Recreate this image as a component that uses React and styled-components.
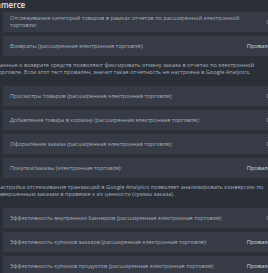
import React from 'react';
import styled, { createGlobalStyle } from 'styled-components';

const GlobalStyle = createGlobalStyle`
  * {
    box-sizing: border-box;
  }

  body {
    margin: 0;
    padding: 0;
    overflow: hidden;
    background-color: #2b2f37;
  }
`;

// Panel is wider than the window, it is cropped on both sides
const Panel = styled.section`
  font-family: 'Open Sans', 'Noto Sans', sans-serif;
  width: 300px;
  margin-left: -20px;
  display: flex;
  flex-direction: column;
  gap: 4px;
`;

const Title = styled.h2`
  margin: 0 0 -2px;
  height: 10px;
  font-size: 8px;
  line-height: 10px;
  font-weight: 600;
  color: #e4e7eb;
`;

const Row = styled.div`
  margin-left: 23px;
  display: flex;
  align-items: center;
  min-height: 20px;
  padding: 3px 0 3px 7px;
  background-color: #363b45;
`;

const Label = styled.div`
  flex: 1;
  font-size: 5.65px;
  line-height: 7px;
  color: #a9b0bc;
`;

const Status = styled.div`
  width: 40px;
  padding-right: 6px;
  text-align: right;
  font-size: 5.65px;
  line-height: 14px;
  color: ${(p) => (p.$failed ? '#d6d9de' : '#a9b0bc')};
`;

const Note = styled.p`
  margin: 0;
  padding: 2px 0 6px 16px;
  width: 296px;
  font-size: 5.65px;
  line-height: 7px;
  color: #a9b0bc;
`;

const items = [
  { type: 'row', label: 'Отслеживание категорий товаров в рамках отчетов по расширенной электронной торговли:', status: 'OK' },
  { type: 'row', label: 'Возвраты (расширенная электронная торговля):', status: 'Провален', failed: true },
  { type: 'note', text: 'Данные о возврате средств позволяют фиксировать отмену заказа в отчетах по электронной торговле. Если этот тест провален, значит такая отчетность не настроена в Google Analytics.' },
  { type: 'row', label: 'Просмотры товаров (расширенная электронная торговля):', status: 'OK' },
  { type: 'row', label: 'Добавление товара в корзину (расширенная электронная торговля):', status: 'OK' },
  { type: 'row', label: 'Оформление заказа (расширенная электронная торговля):', status: 'OK' },
  { type: 'row', label: 'Покупки/заказы (электронная торговля):', status: 'Провален', failed: true },
  { type: 'note', text: 'Настройка отслеживания транзакций в Google Analytics позволяет анализировать конверсию по завершенным заказам в привязке к их ценности (суммы заказа).' },
  { type: 'row', label: 'Эффективность внутренних баннеров (расширенная электронная торговля):', status: 'OK' },
  { type: 'row', label: 'Эффективность купонов заказов (расширенная электронная торговля):', status: 'Провален', failed: true },
  { type: 'row', label: 'Эффективность купонов продуктов (расширенная электронная торговля):', status: 'Провален', failed: true },
];

const App = () => {
  return (
    <>
      <GlobalStyle />
      <Panel>
        <Title>Ecommerce</Title>
        {items.map((item, i) =>
          item.type === 'note' ? (
            <Note key={i}>{item.text}</Note>
          ) : (
            <Row key={i}>
              <Label>{item.label}</Label>
              <Status $failed={item.failed}>{item.status}</Status>
            </Row>
          )
        )}
      </Panel>
    </>
  );
};

export default App;
